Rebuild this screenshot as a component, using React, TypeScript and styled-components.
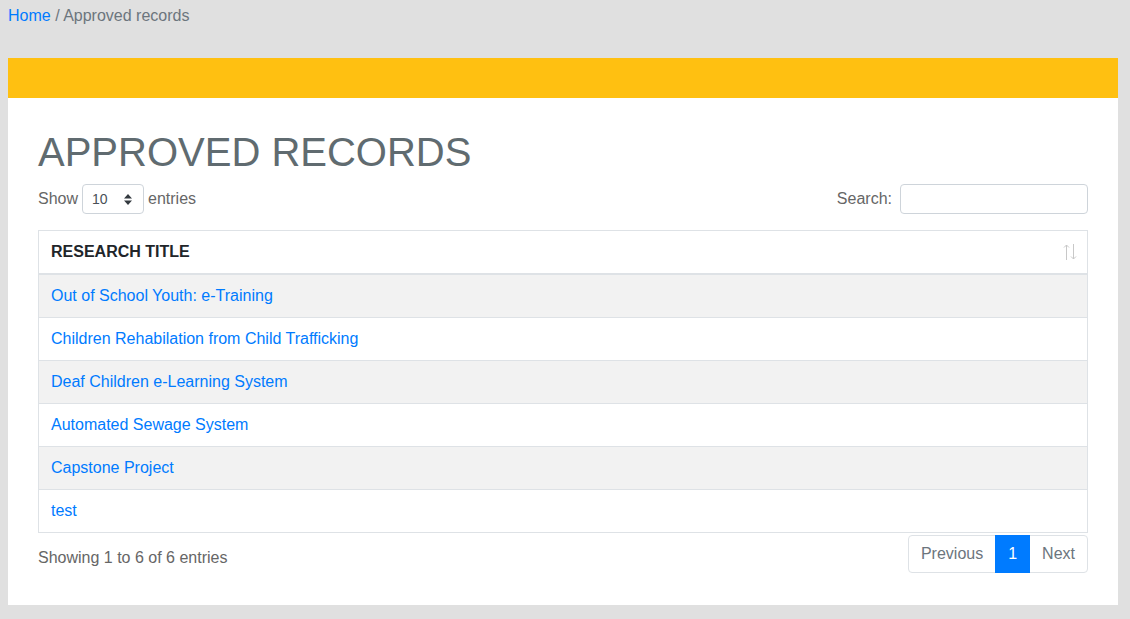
import React from "react";
import styled, { createGlobalStyle } from "styled-components";

const GlobalStyle = createGlobalStyle`
  html, body {
    margin: 0;
    padding: 0;
    background: #e0e0e0;
    font-family: "Liberation Sans", Arial, sans-serif;
    font-size: 16px;
    line-height: 1.5;
    color: #212529;
  }
  * { box-sizing: border-box; }
`;

const Page = styled.div`
  padding: 4px 12px 14px 8px;
  min-height: 619px;
`;

const Breadcrumb = styled.nav`
  height: 54px;
  color: #6c757d;
  font-size: 16px;
  line-height: 24px;
`;

const Crumb = styled.a`
  color: #007bff;
  text-decoration: none;
`;

const Card = styled.section`
  background: #fff;
`;

const CardStripe = styled.div`
  height: 40px;
  background: #ffc011;
`;

const CardBody = styled.div`
  padding: 30px 30px 32px 30px;
`;

const Title = styled.h1`
  margin: 0 0 8px 0;
  font-size: 40px;
  font-weight: 400;
  line-height: 48px;
  color: #606b70;
`;

const Controls = styled.div`
  display: flex;
  justify-content: space-between;
  align-items: center;
  height: 30px;
  color: #666;
  font-size: 16px;
`;

const Label = styled.label<{ $gap?: number }>`
  display: flex;
  align-items: center;
  gap: ${(p) => p.$gap ?? 4}px;
  line-height: 24px;
`;

const SelectWrap = styled.span`
  position: relative;
  display: inline-block;
  width: 62px;
  height: 30px;
`;

const Select = styled.select`
  appearance: none;
  -webkit-appearance: none;
  width: 100%;
  height: 100%;
  border: 1px solid #ced4da;
  border-radius: 4px;
  background: #fff;
  padding: 0 8px 0 9px;
  font-family: "Liberation Sans", Arial, sans-serif;
  font-size: 14px;
  color: #495057;
  outline: none;
`;

const SelectArrow = styled.svg`
  position: absolute;
  right: 12px;
  top: 10px;
  pointer-events: none;
`;

const SearchInput = styled.input`
  width: 188px;
  height: 30px;
  border: 1px solid #ced4da;
  border-radius: 4px;
  padding: 0 8px;
  font-family: "Liberation Sans", Arial, sans-serif;
  font-size: 14px;
  outline: none;
`;

const Table = styled.table`
  width: 100%;
  margin-top: 16px;
  border-collapse: collapse;
  border: 1px solid #dee2e6;
`;

const Th = styled.th`
  padding: 10px 12px 11px 12px;
  line-height: 21px;
  text-align: left;
  font-size: 16px;
  font-weight: 700;
  color: #212529;
  border-bottom: 2px solid #dee2e6;
`;

const ThInner = styled.div`
  display: flex;
  justify-content: space-between;
  align-items: center;
`;

const SortIcon = styled.svg`
  display: block;
  margin-right: -2px;
  margin-top: 1px;
`;

const Tr = styled.tr<{ $striped: boolean }>`
  background: ${(p) => (p.$striped ? "#f2f2f2" : "#fff")};
`;

const Td = styled.td`
  padding: 12px;
  line-height: 18px;
  border-top: 1px solid #dee2e6;
  font-size: 16px;
`;

const RowLink = styled.a`
  color: #007bff;
  text-decoration: none;
`;

const Footer = styled.div`
  display: flex;
  justify-content: space-between;
  align-items: flex-start;
  margin-top: 2px;
`;

const Info = styled.div`
  padding-top: 11px;
  color: #666;
  font-size: 16px;
  line-height: 24px;
`;

const Pager = styled.ul`
  display: flex;
  list-style: none;
  margin: 0;
  padding: 0;
`;

const PageItem = styled.li<{ $active?: boolean; $first?: boolean; $last?: boolean }>`
  padding: 6px 12px;
  line-height: 24px;
  font-size: 16px;
  border: 1px solid ${(p) => (p.$active ? "#007bff" : "#dee2e6")};
  margin-left: ${(p) => (p.$first ? "0" : "-1px")};
  background: ${(p) => (p.$active ? "#007bff" : "#fff")};
  color: ${(p) => (p.$active ? "#fff" : "#6c757d")};
  border-radius: ${(p) => (p.$first ? "4px 0 0 4px" : p.$last ? "0 4px 4px 0" : "0")};
  position: relative;
  z-index: ${(p) => (p.$active ? 1 : 0)};
`;

const rows = [
  "Out of School Youth: e-Training",
  "Children Rehabilation from Child Trafficking",
  "Deaf Children e-Learning System",
  "Automated Sewage System",
  "Capstone Project",
  "test",
];

export default function App() {
  return (
    <>
      <GlobalStyle />
      <Page>
        <Breadcrumb>
          <Crumb href="#">Home</Crumb> / Approved records
        </Breadcrumb>
        <Card>
          <CardStripe />
          <CardBody>
            <Title>APPROVED RECORDS</Title>
            <Controls>
              <Label>
                Show
                <SelectWrap>
                  <Select defaultValue="10">
                    <option value="10">10</option>
                    <option value="25">25</option>
                    <option value="50">50</option>
                    <option value="100">100</option>
                  </Select>
                  <SelectArrow width="8" height="11" viewBox="0 0 8 11">
                    <path d="M4 0 L8 4.5 H0 Z M4 11 L0 6.5 H8 Z" fill="#343a40" />
                  </SelectArrow>
                </SelectWrap>
                entries
              </Label>
              <Label $gap={8}>
                Search:
                <SearchInput type="search" />
              </Label>
            </Controls>
            <Table>
              <thead>
                <tr>
                  <Th>
                    <ThInner>
                      RESEARCH TITLE
                      <SortIcon width="14" height="18" viewBox="0 0 14 18">
                        <g stroke="#c8c8c8" strokeWidth="1" fill="none">
                          <path d="M3.5 2 V17" />
                          <path d="M1 4.5 L3.5 2 L6 4.5" />
                          <path d="M10.5 1 V16" />
                          <path d="M8 13.5 L10.5 16 L13 13.5" />
                        </g>
                      </SortIcon>
                    </ThInner>
                  </Th>
                </tr>
              </thead>
              <tbody>
                {rows.map((r, i) => (
                  <Tr key={r} $striped={i % 2 === 0}>
                    <Td>
                      <RowLink href="#">{r}</RowLink>
                    </Td>
                  </Tr>
                ))}
              </tbody>
            </Table>
            <Footer>
              <Info>Showing 1 to 6 of 6 entries</Info>
              <Pager>
                <PageItem $first>Previous</PageItem>
                <PageItem $active>1</PageItem>
                <PageItem $last>Next</PageItem>
              </Pager>
            </Footer>
          </CardBody>
        </Card>
      </Page>
    </>
  );
}
